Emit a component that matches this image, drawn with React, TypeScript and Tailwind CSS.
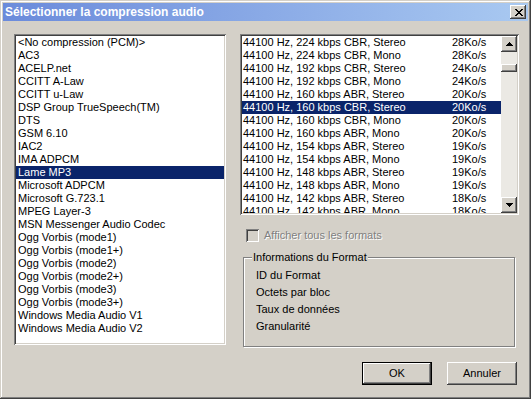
import React from 'react'

const CODECS = [
  '<No compression (PCM)>',
  'AC3',
  'ACELP.net',
  'CCITT A-Law',
  'CCITT u-Law',
  'DSP Group TrueSpeech(TM)',
  'DTS',
  'GSM 6.10',
  'IAC2',
  'IMA ADPCM',
  'Lame MP3',
  'Microsoft ADPCM',
  'Microsoft G.723.1',
  'MPEG Layer-3',
  'MSN Messenger Audio Codec',
  'Ogg Vorbis (mode1)',
  'Ogg Vorbis (mode1+)',
  'Ogg Vorbis (mode2)',
  'Ogg Vorbis (mode2+)',
  'Ogg Vorbis (mode3)',
  'Ogg Vorbis (mode3+)',
  'Windows Media Audio V1',
  'Windows Media Audio V2',
]

const FORMATS: [string, string][] = [
  ['44100 Hz, 224 kbps CBR, Stereo', '28Ko/s'],
  ['44100 Hz, 224 kbps CBR, Mono', '28Ko/s'],
  ['44100 Hz, 192 kbps CBR, Stereo', '24Ko/s'],
  ['44100 Hz, 192 kbps CBR, Mono', '24Ko/s'],
  ['44100 Hz, 160 kbps ABR, Stereo', '20Ko/s'],
  ['44100 Hz, 160 kbps CBR, Stereo', '20Ko/s'],
  ['44100 Hz, 160 kbps CBR, Mono', '20Ko/s'],
  ['44100 Hz, 160 kbps ABR, Mono', '20Ko/s'],
  ['44100 Hz, 154 kbps ABR, Stereo', '19Ko/s'],
  ['44100 Hz, 154 kbps ABR, Mono', '19Ko/s'],
  ['44100 Hz, 148 kbps ABR, Stereo', '19Ko/s'],
  ['44100 Hz, 148 kbps ABR, Mono', '19Ko/s'],
  ['44100 Hz, 142 kbps ABR, Stereo', '18Ko/s'],
  ['44100 Hz, 142 kbps ABR, Mono', '18Ko/s'],
]

const INFO = ['ID du Format', 'Octets par bloc', 'Taux de données', 'Granularité']

// win classic bevels
const raised = 'shadow-[inset_-1px_-1px_#404040,inset_1px_1px_#ffffff,inset_-2px_-2px_#808080,inset_2px_2px_#d4d0c8]'
const sunken = 'shadow-[inset_1px_1px_#808080,inset_-1px_-1px_#ffffff,inset_2px_2px_#404040,inset_-2px_-2px_#d4d0c8]'

const Arrow = ({ down }: { down?: boolean }) => (
  <svg width="7" height="4" viewBox="0 0 7 4" shapeRendering="crispEdges" className={down ? 'rotate-180' : ''}>
    <path d="M3 0h1v1H3z M2 1h3v1H2z M1 2h5v1H1z M0 3h7v1H0z" fill="#000" />
  </svg>
)

export default function App() {
  return (
    <div className="w-[531px] h-[399px] bg-[#d4d0c8] p-[3px] flex flex-col text-[11px] text-black font-['Liberation_Sans',Arial,sans-serif] shadow-[inset_-1px_-1px_#404040,inset_1px_1px_#d4d0c8,inset_-2px_-2px_#808080,inset_2px_2px_#ffffff]">
      {/* title bar */}
      <div className="h-[18px] flex items-center justify-between pl-[2px] pr-[2px] bg-[linear-gradient(to_right,#6b8bdb,#a9c9f1)]">
        <span className="font-bold text-white text-[12px] leading-[18px]">Sélectionner la compression audio</span>
        <div className={`w-[16px] h-[14px] bg-[#d4d0c8] flex items-center justify-center pl-[1px] ${raised}`}>
          <svg width="8" height="7" viewBox="0 0 8 7" shapeRendering="crispEdges">
            <path d="M0 0h2v1H0z M6 0h2v1H6z M1 1h2v1H1z M5 1h2v1H5z M2 2h4v1H2z M3 3h2v1H3z M2 4h4v1H2z M1 5h2v1H1z M5 5h2v1H5z M0 6h2v1H0z M6 6h2v1H6z" fill="#000" />
          </svg>
        </div>
      </div>

      <div className="flex pl-[11px] pt-[13px]">
        {/* codec list */}
        <div className={`w-[212px] h-[311px] bg-white p-[2px] overflow-hidden ${sunken}`}>
          {CODECS.map((c, i) => (
            <div key={c} className={`h-[13px] leading-[13px] pl-[2px] whitespace-nowrap ${i === 10 ? 'bg-[#0a246a] text-white' : ''}`}>{c}</div>
          ))}
        </div>

        <div className="ml-[14px] w-[279px] flex flex-col">
          {/* format list */}
          <div className={`h-[181px] bg-white p-[2px] flex ${sunken}`}>
            <div className="flex-1 overflow-hidden">
              {FORMATS.map(([f, r], i) => (
                <div key={f} className={`h-[13px] leading-[13px] pl-[1px] flex whitespace-nowrap ${i === 5 ? 'bg-[#0a246a] text-white' : ''}`}>
                  <span className="w-[209px]">{f}</span>
                  <span>{r}</span>
                </div>
              ))}
            </div>
            <div className="w-[16px] flex flex-col bg-[#ebe9e4]">
              <div className={`h-[16px] bg-[#d4d0c8] flex items-center justify-center ${raised}`}><Arrow /></div>
              <div className="flex-1">
                <div className={`mt-[12px] h-[8px] bg-[#d4d0c8] ${raised}`} />
              </div>
              <div className={`h-[16px] bg-[#d4d0c8] flex items-center justify-center ${raised}`}><Arrow down /></div>
            </div>
          </div>

          {/* disabled checkbox */}
          <div className="mt-[14px] h-[13px] flex items-center pl-[6px]">
            <div className={`w-[13px] h-[13px] bg-[#d4d0c8] ${sunken}`} />
            <span className="ml-[5px] leading-[13px] text-[#808080] [text-shadow:1px_1px_#ffffff]">Afficher tous les formats</span>
          </div>

          {/* group box */}
          <div className="relative mt-[15px] ml-[3px] w-[272px] h-[90px] border border-[#808080] shadow-[1px_1px_#ffffff,inset_1px_1px_#ffffff] pt-[9px] pl-[12px]">
            <span className="absolute -top-[7px] left-[8px] px-[1px] bg-[#d4d0c8] leading-[13px]">Informations du Format</span>
            {INFO.map(t => (
              <div key={t} className="h-[17px] leading-[17px]">{t}</div>
            ))}
          </div>
        </div>
      </div>

      {/* buttons */}
      <div className="flex justify-end gap-[15px] pr-[11px] mt-[15px]">
        <button className={`w-[70px] h-[23px] bg-[#d4d0c8] border border-black ${raised}`}>OK</button>
        <button className={`w-[70px] h-[23px] bg-[#d4d0c8] ${raised}`}>Annuler</button>
      </div>
    </div>
  )
}
